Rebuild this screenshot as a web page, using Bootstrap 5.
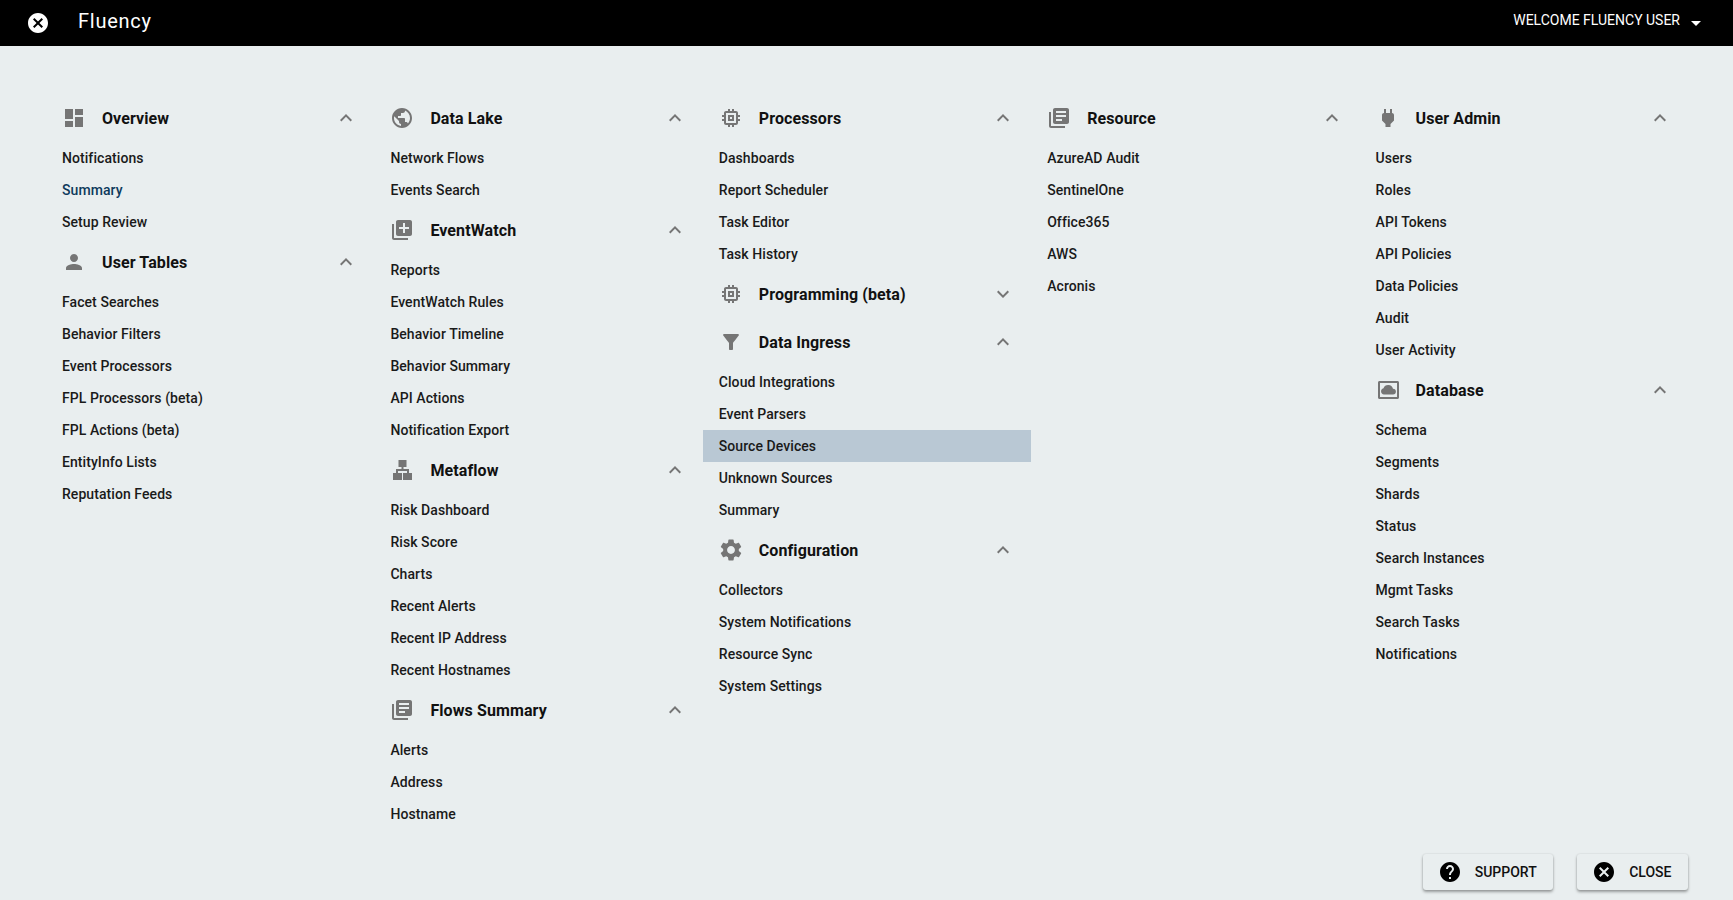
<!DOCTYPE html>
<html lang="en">
<head>
<meta charset="utf-8">
<title>Fluency</title>
<link href="https://cdn.jsdelivr.net/npm/bootstrap@5.3.0/dist/css/bootstrap.min.css" rel="stylesheet">
<style>
body{font-family:Roboto,"Liberation Sans",sans-serif;background:#e9eeef;color:#111;height:100vh;overflow:hidden}
.topbar{height:46px;background:#000;color:#fff;padding:0 25px 0 26px}
.topbar .brand{font-size:20px;font-weight:400;letter-spacing:.75px;margin-left:28px;color:#fff;padding-bottom:5px}
.welcome{font-size:14px;font-weight:400;color:#fff;padding-bottom:6px}
.ico{width:24px;height:24px;fill:#757575;flex:none}
.ico-white{fill:#fff}
.ico-black{fill:#000}
.menu-wrap{padding:48px 44.8px 0 46.2px}
.menu-head{height:48px;padding:0 16.2px 0 15.8px}
.menu-head .ttl{font-size:16px;font-weight:700;color:#111;margin-left:16px;padding-top:2px;letter-spacing:.1px}
.menu-item{display:block;height:32px;line-height:32px;padding:0 15.8px;font-size:14px;font-weight:500;color:#1a1a1a;letter-spacing:.07px;text-decoration:none}
.menu-item.is-cur{color:#0e3a5c}
.menu-item.is-sel{background:#b9c8d4}
.foot-bar{padding:0 45px 10px 0;gap:24px}
.act-btn{height:36px;padding:0 16.5px 0 15px;background:#e9eeef;border:0;border-radius:3px;font-size:14px;font-weight:500;color:#111;box-shadow:0 2px 3px rgba(0,0,0,.35),0 0 2px rgba(0,0,0,.12);gap:13px}
.act-btn:hover{background:#e9eeef;color:#111}
</style>
</head>
<body class="d-flex flex-column">
<svg width="0" height="0" class="d-none">
<symbol id="i-dash" viewBox="0 0 24 24"><path d="M3 13h8V3H3v10zm0 8h8v-6H3v6zm10 0h8V11h-8v10zm0-18v6h8V3h-8z"/></symbol>
<symbol id="i-globe" viewBox="0 0 24 24"><path d="M12 2C6.48 2 2 6.48 2 12s4.48 10 10 10 10-4.48 10-10S17.52 2 12 2zm-1 17.93c-3.95-.49-7-3.85-7-7.93 0-.62.08-1.21.21-1.79L9 15v1c0 1.1.9 2 2 2v1.93zm6.9-2.54c-.26-.81-1-1.39-1.9-1.39h-1v-3c0-.55-.45-1-1-1H8v-2h2c.55 0 1-.45 1-1V7h2c1.1 0 2-.9 2-2v-.41c2.93 1.19 5 4.06 5 7.41 0 2.08-.8 3.97-2.1 5.39z"/></symbol>
<symbol id="i-libadd" viewBox="0 0 24 24"><path d="M4 6H2v14c0 1.1.9 2 2 2h14v-2H4V6zm16-4H8c-1.1 0-2 .9-2 2v12c0 1.1.9 2 2 2h12c1.1 0 2-.9 2-2V4c0-1.1-.9-2-2-2zm-1 9h-4v4h-2v-4H9V9h4V5h2v4h4v2z"/></symbol>
<symbol id="i-person" viewBox="0 0 24 24"><path d="M12 12c2.21 0 4-1.79 4-4s-1.79-4-4-4-4 1.79-4 4 1.79 4 4 4zm0 2c-2.67 0-8 1.34-8 4v2h16v-2c0-2.66-5.33-4-8-4z"/></symbol>
<symbol id="i-tree" viewBox="0 0 24 24"><path d="M8.500 2h8v7h-3v2H19v4h3v7h-9v-7h4v-2H8v2h4v7H3v-7h3v-4h5.500V9h-3z"/></symbol>
<symbol id="i-books" viewBox="0 0 24 24"><path d="M4 6H2v14c0 1.1.9 2 2 2h14v-2H4V6zm16-4H8c-1.1 0-2 .9-2 2v12c0 1.1.9 2 2 2h12c1.1 0 2-.9 2-2V4c0-1.1-.9-2-2-2zm-1 9H9V9h10v2zm-4 4H9v-2h6v2zm4-8H9V5h10v2z"/></symbol>
<symbol id="i-chip" viewBox="0 0 24 24"><path d="M15 9H9v6h6V9zm-2 4h-2v-2h2v2zm8-2V9h-2V7c0-1.100-.9-2-2-2h-2V3h-2v2h-2V3H9v2H7c-1.100 0-2 .9-2 2v2H3v2h2v2H3v2h2v2c0 1.100.9 2 2 2h2v2h2v-2h2v2h2v-2h2c1.100 0 2-.9 2-2v-2h2v-2h-2v-2h2zm-4 6H7V7h10v10z"/></symbol>
<symbol id="i-filter" viewBox="0 0 24 24"><path d="M4.250 5.610C6.270 8.200 10 13 10 13v6c0 .55.45 1 1 1h2c.55 0 1-.45 1-1v-6s3.720-4.800 5.740-7.390c.51-.66.04-1.610-.79-1.610H5.040c-.83 0-1.300.95-.79 1.610z"/></symbol>
<symbol id="i-gear" viewBox="1 1 22 22"><path d="M19.140 12.940c.04-.3.06-.61.06-.94 0-.32-.02-.64-.07-.94l2.030-1.580c.18-.14.23-.41.12-.61l-1.920-3.320c-.12-.22-.37-.29-.59-.22l-2.390.96c-.5-.38-1.030-.7-1.620-.94l-.36-2.540c-.04-.24-.24-.41-.48-.41h-3.840c-.24 0-.43.17-.47.41l-.36 2.540c-.59.24-1.130.57-1.620.94l-2.390-.96c-.22-.08-.47 0-.59.22L2.740 8.870c-.12.21-.08.47.12.61l2.030 1.580c-.05.3-.09.63-.09.94s.02.64.07.94l-2.030 1.580c-.18.14-.23.41-.12.61l1.920 3.320c.12.22.37.29.59.22l2.390-.96c.5.38 1.030.7 1.620.94l.36 2.540c.05.24.24.41.48.41h3.840c.24 0 .44-.17.47-.41l.36-2.540c.59-.24 1.130-.56 1.620-.94l2.390.96c.22.08.47 0 .59-.22l1.920-3.320c.12-.22.07-.47-.12-.61l-2.010-1.580zM12 15.600c-1.980 0-3.600-1.620-3.600-3.600s1.620-3.600 3.600-3.600 3.600 1.620 3.600 3.600-1.620 3.600-3.600 3.600z"/></symbol>
<symbol id="i-plug" viewBox="0 0 24 24"><path d="M16.010 7L16 3h-2v4h-4V3H8v4h-.01C7 6.990 6 7.990 6 8.990v5.490L9.500 18v3h5v-3l3.500-3.510v-5.500c0-1-1-2-1.990-1.990z"/></symbol>
<symbol id="i-cloudbox" viewBox="0 0 24 24"><path fill-rule="evenodd" d="M3.500 3h18c.8 0 1.500.7 1.500 1.500v15c0 .8-.7 1.500-1.500 1.500h-18C2.700 21 2 20.300 2 19.500v-15C2 3.700 2.700 3 3.500 3zM4 5v14h17V5zM8 16.500a3.200 3.200 0 0 1-.5-6.300 5 5 0 0 1 9.500.5 2.900 2.900 0 0 1 0 5.800z"/></symbol>
<symbol id="i-up" viewBox="0 0 24 24"><path d="M12 8l-6 6 1.410 1.410L12 10.830l4.590 4.580L18 14z"/></symbol>
<symbol id="i-down" viewBox="0 0 24 24"><path d="M16.590 8.590L12 13.170 7.410 8.590 6 10l6 6 6-6z"/></symbol>
<symbol id="i-caret" viewBox="0 0 24 24"><path d="M7 10l5 5 5-5z"/></symbol>
<symbol id="i-cancel" viewBox="0 0 24 24"><path d="M12 2C6.470 2 2 6.470 2 12s4.470 10 10 10 10-4.470 10-10S17.530 2 12 2zm5 13.590L15.590 17 12 13.410 8.410 17 7 15.590 10.590 12 7 8.410 8.410 7 12 10.590 15.590 7 17 8.410 13.410 12 17 15.590z"/></symbol>
<symbol id="i-help" viewBox="0 0 24 24"><path d="M12 2C6.480 2 2 6.480 2 12s4.480 10 10 10 10-4.480 10-10S17.520 2 12 2zm1 17h-2v-2h2v2zm2.070-7.750l-.9.92C13.450 12.900 13 13.500 13 15h-2v-.5c0-1.100.45-2.100 1.170-2.830l1.240-1.260c.37-.36.59-.86.59-1.410 0-1.100-.9-2-2-2s-2 .9-2 2H8c0-2.210 1.790-4 4-4s4 1.790 4 4c0 .88-.36 1.680-.93 2.250z"/></symbol>
</svg>

<header class="topbar d-flex align-items-center justify-content-between flex-none">
  <div class="d-flex align-items-center">
    <svg class="ico ico-white"><use href="#i-cancel"/></svg>
    <span class="brand">Fluency</span>
  </div>
  <div class="d-flex align-items-center gap-1">
    <span class="welcome">WELCOME FLUENCY USER</span>
    <svg class="ico ico-white"><use href="#i-caret"/></svg>
  </div>
</header>

<main class="menu-wrap flex-grow-1">
  <div class="row g-0 row-cols-5">
    <div class="col">
      <div class="menu-head d-flex align-items-center"><svg class="ico"><use href="#i-dash"/></svg><span class="ttl flex-grow-1">Overview</span><svg class="ico"><use href="#i-up"/></svg></div>
      <a class="menu-item" href="#">Notifications</a>
      <a class="menu-item is-cur" href="#">Summary</a>
      <a class="menu-item" href="#">Setup Review</a>
      <div class="menu-head d-flex align-items-center"><svg class="ico"><use href="#i-person"/></svg><span class="ttl flex-grow-1">User Tables</span><svg class="ico"><use href="#i-up"/></svg></div>
      <a class="menu-item" href="#">Facet Searches</a>
      <a class="menu-item" href="#">Behavior Filters</a>
      <a class="menu-item" href="#">Event Processors</a>
      <a class="menu-item" href="#">FPL Processors (beta)</a>
      <a class="menu-item" href="#">FPL Actions (beta)</a>
      <a class="menu-item" href="#">EntityInfo Lists</a>
      <a class="menu-item" href="#">Reputation Feeds</a>
    </div>
    <div class="col">
      <div class="menu-head d-flex align-items-center"><svg class="ico"><use href="#i-globe"/></svg><span class="ttl flex-grow-1">Data Lake</span><svg class="ico"><use href="#i-up"/></svg></div>
      <a class="menu-item" href="#">Network Flows</a>
      <a class="menu-item" href="#">Events Search</a>
      <div class="menu-head d-flex align-items-center"><svg class="ico"><use href="#i-libadd"/></svg><span class="ttl flex-grow-1">EventWatch</span><svg class="ico"><use href="#i-up"/></svg></div>
      <a class="menu-item" href="#">Reports</a>
      <a class="menu-item" href="#">EventWatch Rules</a>
      <a class="menu-item" href="#">Behavior Timeline</a>
      <a class="menu-item" href="#">Behavior Summary</a>
      <a class="menu-item" href="#">API Actions</a>
      <a class="menu-item" href="#">Notification Export</a>
      <div class="menu-head d-flex align-items-center"><svg class="ico"><use href="#i-tree"/></svg><span class="ttl flex-grow-1">Metaflow</span><svg class="ico"><use href="#i-up"/></svg></div>
      <a class="menu-item" href="#">Risk Dashboard</a>
      <a class="menu-item" href="#">Risk Score</a>
      <a class="menu-item" href="#">Charts</a>
      <a class="menu-item" href="#">Recent Alerts</a>
      <a class="menu-item" href="#">Recent IP Address</a>
      <a class="menu-item" href="#">Recent Hostnames</a>
      <div class="menu-head d-flex align-items-center"><svg class="ico"><use href="#i-books"/></svg><span class="ttl flex-grow-1">Flows Summary</span><svg class="ico"><use href="#i-up"/></svg></div>
      <a class="menu-item" href="#">Alerts</a>
      <a class="menu-item" href="#">Address</a>
      <a class="menu-item" href="#">Hostname</a>
    </div>
    <div class="col">
      <div class="menu-head d-flex align-items-center"><svg class="ico"><use href="#i-chip"/></svg><span class="ttl flex-grow-1">Processors</span><svg class="ico"><use href="#i-up"/></svg></div>
      <a class="menu-item" href="#">Dashboards</a>
      <a class="menu-item" href="#">Report Scheduler</a>
      <a class="menu-item" href="#">Task Editor</a>
      <a class="menu-item" href="#">Task History</a>
      <div class="menu-head d-flex align-items-center"><svg class="ico"><use href="#i-chip"/></svg><span class="ttl flex-grow-1">Programming (beta)</span><svg class="ico"><use href="#i-down"/></svg></div>
      <div class="menu-head d-flex align-items-center"><svg class="ico"><use href="#i-filter"/></svg><span class="ttl flex-grow-1">Data Ingress</span><svg class="ico"><use href="#i-up"/></svg></div>
      <a class="menu-item" href="#">Cloud Integrations</a>
      <a class="menu-item" href="#">Event Parsers</a>
      <a class="menu-item is-sel" href="#">Source Devices</a>
      <a class="menu-item" href="#">Unknown Sources</a>
      <a class="menu-item" href="#">Summary</a>
      <div class="menu-head d-flex align-items-center"><svg class="ico"><use href="#i-gear"/></svg><span class="ttl flex-grow-1">Configuration</span><svg class="ico"><use href="#i-up"/></svg></div>
      <a class="menu-item" href="#">Collectors</a>
      <a class="menu-item" href="#">System Notifications</a>
      <a class="menu-item" href="#">Resource Sync</a>
      <a class="menu-item" href="#">System Settings</a>
    </div>
    <div class="col">
      <div class="menu-head d-flex align-items-center"><svg class="ico"><use href="#i-books"/></svg><span class="ttl flex-grow-1">Resource</span><svg class="ico"><use href="#i-up"/></svg></div>
      <a class="menu-item" href="#">AzureAD Audit</a>
      <a class="menu-item" href="#">SentinelOne</a>
      <a class="menu-item" href="#">Office365</a>
      <a class="menu-item" href="#">AWS</a>
      <a class="menu-item" href="#">Acronis</a>
    </div>
    <div class="col">
      <div class="menu-head d-flex align-items-center"><svg class="ico"><use href="#i-plug"/></svg><span class="ttl flex-grow-1">User Admin</span><svg class="ico"><use href="#i-up"/></svg></div>
      <a class="menu-item" href="#">Users</a>
      <a class="menu-item" href="#">Roles</a>
      <a class="menu-item" href="#">API Tokens</a>
      <a class="menu-item" href="#">API Policies</a>
      <a class="menu-item" href="#">Data Policies</a>
      <a class="menu-item" href="#">Audit</a>
      <a class="menu-item" href="#">User Activity</a>
      <div class="menu-head d-flex align-items-center"><svg class="ico"><use href="#i-cloudbox"/></svg><span class="ttl flex-grow-1">Database</span><svg class="ico"><use href="#i-up"/></svg></div>
      <a class="menu-item" href="#">Schema</a>
      <a class="menu-item" href="#">Segments</a>
      <a class="menu-item" href="#">Shards</a>
      <a class="menu-item" href="#">Status</a>
      <a class="menu-item" href="#">Search Instances</a>
      <a class="menu-item" href="#">Mgmt Tasks</a>
      <a class="menu-item" href="#">Search Tasks</a>
      <a class="menu-item" href="#">Notifications</a>
    </div>
  </div>
</main>

<footer class="foot-bar d-flex justify-content-end">
  <button type="button" class="btn act-btn d-flex align-items-center"><svg class="ico ico-black"><use href="#i-help"/></svg>SUPPORT</button>
  <button type="button" class="btn act-btn d-flex align-items-center"><svg class="ico ico-black"><use href="#i-cancel"/></svg>CLOSE</button>
</footer>
</body>
</html>
